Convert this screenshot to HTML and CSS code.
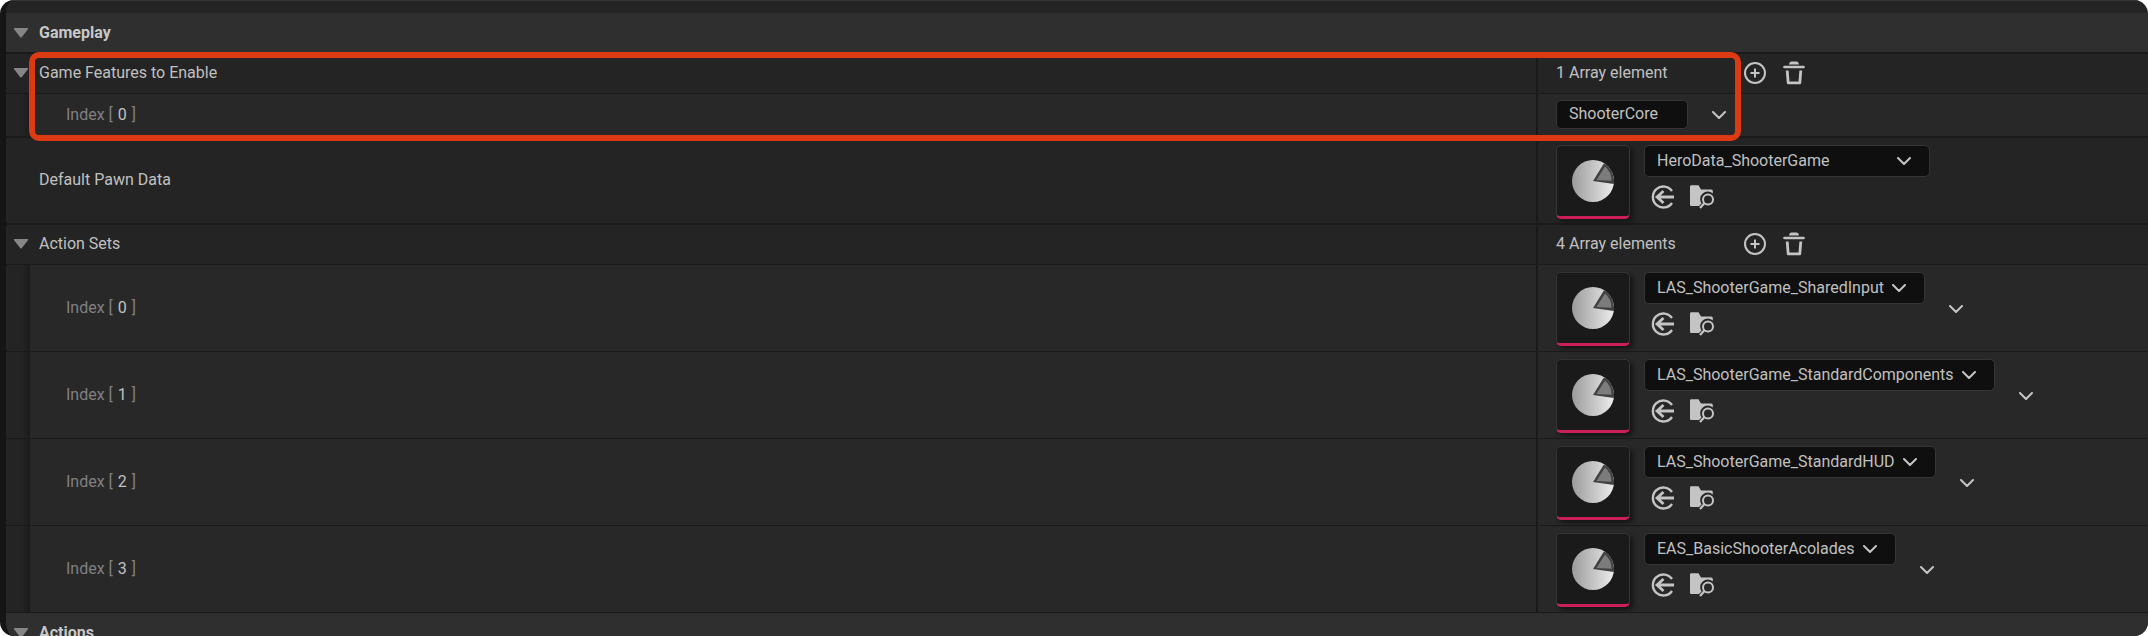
FILE: index.html
```html
<!DOCTYPE html>
<html lang="en">
<head>
<meta charset="utf-8">
<title>Gameplay details</title>
<link rel="stylesheet" href="styles.css">
</head>
<body>
<svg class="defs" aria-hidden="true">
  <defs>
    <linearGradient id="pie-fill" x1="0" y1="0" x2="1" y2="0">
      <stop offset="0" stop-color="#9c9c9c"/>
      <stop offset="1" stop-color="#ececec"/>
    </linearGradient>
    <symbol id="triangle" viewBox="0 0 15 10"><path d="M1 0h13q1 0 .6 .9L8.200 9.300q-.7 .7-1.400 0L.4 .9Q0 0 1 0z" fill="#868686"/></symbol>
    <symbol id="chevron" viewBox="0 0 14 8"><path d="M1 1l6 6 6-6" fill="none" stroke="#c4c4c4" stroke-width="2" stroke-linecap="round" stroke-linejoin="round"/></symbol>
    <symbol id="plus" viewBox="0 0 22 22"><circle cx="11" cy="11" r="10" fill="none" stroke="#c4c4c4" stroke-width="2"/><path d="M11 6.500v9M6.500 11h9" stroke="#c4c4c4" stroke-width="2"/></symbol>
    <symbol id="trash" viewBox="0 0 22 24"><path d="M6 3.500C6.500 1.200 7.500 .6 8.500 .6h5c1 0 2 .6 2.500 2.900z" fill="#c4c4c4"/><path d="M1.500 6h19" stroke="#c4c4c4" stroke-width="2.600" stroke-linecap="round"/><path d="M4.200 9.500l1 12.300h11.600l1-12.300" fill="none" stroke="#c4c4c4" stroke-width="2.800" stroke-linejoin="round"/></symbol>
    <symbol id="use" viewBox="0 0 24 24"><path d="M21 6A10.500 10.500 0 1 0 21 18" fill="none" stroke="#c4c4c4" stroke-width="2.400"/><path d="M23 12H6M12.500 6L6 12l6.500 6" fill="none" stroke="#c4c4c4" stroke-width="2.800"/></symbol>
    <symbol id="browse" viewBox="0 0 24 24"><path d="M0 1.500Q0 .3 1.200 .3H8.500L11 4.500H21.500Q22.800 4.500 22.800 6V8.500A7.600 7.600 0 0 0 11.500 18.500L9 21H1.200Q0 21 0 19.800z" fill="#c4c4c4"/><circle cx="18" cy="14.500" r="5" fill="none" stroke="#c4c4c4" stroke-width="2"/><path d="M14.500 18l-4.500 5" stroke="#c4c4c4" stroke-width="2.200"/></symbol>
    <symbol id="pie" viewBox="0 0 42 42"><circle cx="21" cy="21" r="21" fill="url(#pie-fill)"/><path d="M21 21L32 3.200A21 21 0 0 1 41.800 24z" fill="#414141"/><path d="M24.500 20L33 6.500A18 18 0 0 1 39.500 20.800z" fill="#7c7c7c"/></symbol>
  </defs>
</svg>
<main class="panel">
  <div class="strip"></div>
  <h2 class="category"><button class="toggle" aria-label="Collapse Gameplay"><svg class="tri"><use href="#triangle"/></svg></button>Gameplay</h2>

  <section class="group">
    <div class="highlight"></div>
    <div class="row">
      <div class="name"><button class="toggle" aria-label="Collapse Game Features to Enable"><svg class="tri"><use href="#triangle"/></svg></button>Game Features to Enable</div>
      <div class="value"><span class="count">1 Array element</span><button class="icon" aria-label="Add element"><svg class="plus"><use href="#plus"/></svg></button><button class="icon" aria-label="Remove all"><svg class="trash"><use href="#trash"/></svg></button></div>
    </div>
    <div class="row child short">
      <label class="name" for="feature">Index [ <b>0</b> ]</label>
      <div class="value"><input class="text" id="feature" value="ShooterCore"><button class="more" aria-label="Element options"><svg class="chev"><use href="#chevron"/></svg></button></div>
    </div>
  </section>

  <section class="group">
    <div class="row asset">
      <label class="name" for="pawn">Default Pawn Data</label>
      <div class="value">
        <div class="thumb"><svg class="pie"><use href="#pie"/></svg></div>
        <div class="picker">
          <div class="combo wide"><select id="pawn"><option>HeroData_ShooterGame</option></select><svg class="chev"><use href="#chevron"/></svg></div>
          <div class="tools"><button class="icon" aria-label="Use selected"><svg class="tool"><use href="#use"/></svg></button><button class="icon" aria-label="Browse"><svg class="tool"><use href="#browse"/></svg></button></div>
        </div>
      </div>
    </div>
  </section>

  <section class="group last">
    <div class="row">
      <div class="name"><button class="toggle" aria-label="Collapse Action Sets"><svg class="tri"><use href="#triangle"/></svg></button>Action Sets</div>
      <div class="value"><span class="count">4 Array elements</span><button class="icon" aria-label="Add element"><svg class="plus"><use href="#plus"/></svg></button><button class="icon" aria-label="Remove all"><svg class="trash"><use href="#trash"/></svg></button></div>
    </div>
    <div class="row child asset">
      <label class="name" for="set0">Index [ <b>0</b> ]</label>
      <div class="value">
        <div class="thumb"><svg class="pie"><use href="#pie"/></svg></div>
        <div class="picker">
          <div class="combo"><select id="set0"><option>LAS_ShooterGame_SharedInput</option></select><svg class="chev"><use href="#chevron"/></svg></div>
          <div class="tools"><button class="icon" aria-label="Use selected"><svg class="tool"><use href="#use"/></svg></button><button class="icon" aria-label="Browse"><svg class="tool"><use href="#browse"/></svg></button></div>
        </div>
        <button class="more" aria-label="Element options"><svg class="chev"><use href="#chevron"/></svg></button>
      </div>
    </div>
    <div class="row child asset">
      <label class="name" for="set1">Index [ <b>1</b> ]</label>
      <div class="value">
        <div class="thumb"><svg class="pie"><use href="#pie"/></svg></div>
        <div class="picker">
          <div class="combo"><select id="set1"><option>LAS_ShooterGame_StandardComponents</option></select><svg class="chev"><use href="#chevron"/></svg></div>
          <div class="tools"><button class="icon" aria-label="Use selected"><svg class="tool"><use href="#use"/></svg></button><button class="icon" aria-label="Browse"><svg class="tool"><use href="#browse"/></svg></button></div>
        </div>
        <button class="more" aria-label="Element options"><svg class="chev"><use href="#chevron"/></svg></button>
      </div>
    </div>
    <div class="row child asset">
      <label class="name" for="set2">Index [ <b>2</b> ]</label>
      <div class="value">
        <div class="thumb"><svg class="pie"><use href="#pie"/></svg></div>
        <div class="picker">
          <div class="combo"><select id="set2"><option>LAS_ShooterGame_StandardHUD</option></select><svg class="chev"><use href="#chevron"/></svg></div>
          <div class="tools"><button class="icon" aria-label="Use selected"><svg class="tool"><use href="#use"/></svg></button><button class="icon" aria-label="Browse"><svg class="tool"><use href="#browse"/></svg></button></div>
        </div>
        <button class="more" aria-label="Element options"><svg class="chev"><use href="#chevron"/></svg></button>
      </div>
    </div>
    <div class="row child asset">
      <label class="name" for="set3">Index [ <b>3</b> ]</label>
      <div class="value">
        <div class="thumb"><svg class="pie"><use href="#pie"/></svg></div>
        <div class="picker">
          <div class="combo"><select id="set3"><option>EAS_BasicShooterAcolades</option></select><svg class="chev"><use href="#chevron"/></svg></div>
          <div class="tools"><button class="icon" aria-label="Use selected"><svg class="tool"><use href="#use"/></svg></button><button class="icon" aria-label="Browse"><svg class="tool"><use href="#browse"/></svg></button></div>
        </div>
        <button class="more" aria-label="Element options"><svg class="chev"><use href="#chevron"/></svg></button>
      </div>
    </div>
  </section>

  <h2 class="category"><button class="toggle" aria-label="Collapse Actions"><svg class="tri"><use href="#triangle"/></svg></button>Actions</h2>
</main>
</body>
</html>
```
FILE: styles.css
```css
* { box-sizing: border-box; }

body {
  margin: 0;
  height: 100vh;
  overflow: hidden;
  background: #fff;
  color: #c0c0c0;
  font: 16px/20px Roboto, "Liberation Sans", sans-serif;
}

svg { display: block; }
.defs { position: absolute; width: 0; height: 0; }

button {
  display: flex;
  margin: 0;
  padding: 0;
  border: 0;
  background: none;
}

.panel {
  height: 100vh;
  overflow: hidden;
  border-left: 6px solid #151515;
  border-radius: 14px;
  background: #242424;
}

.strip {
  height: 13px;
  border-top: 1px solid #353535;
}

.category {
  display: flex;
  align-items: center;
  height: 41px;
  margin: 0;
  border-bottom: 2px solid #1a1a1a;
  background: #2f2f2f;
  color: #c8c8c8;
  font-size: 16px;
  font-weight: 700;
}

.toggle {
  width: 33px;
  padding-left: 7px;
}

.tri { width: 16px; height: 10px; }

.group {
  position: relative;
  border-bottom: 2px solid #1a1a1a;
}

.group.last { border-bottom-width: 1px; }

.row {
  display: grid;
  grid-template-columns: 5fr 2fr;
  min-height: 39px;
}

.row + .row { border-top: 1px solid #1a1a1a; }

.name {
  display: flex;
  align-items: center;
  padding-bottom: 1px;
  white-space: pre;
}

.asset .name { padding-left: 33px; }

.child {
  background: linear-gradient(to right, #242424 16px, #1b1b1b 24px, #282828 24px);
}

.child .name {
  padding-left: 60px;
  color: #808080;
}

.child b {
  margin: 0 1px;
  color: #c0c0c0;
  font-weight: 400;
}

.short { min-height: 43px; }

.value {
  display: flex;
  align-items: center;
  padding-bottom: 1px;
  padding-left: 18px;
  border-left: 2px solid #1a1a1a;
}

.count { width: 188px; }

.icon + .icon { margin-left: 17px; }
.plus { width: 22px; height: 22px; }
.trash { width: 22px; height: 24px; }
.chev { width: 14px; height: 8px; }
.more { margin-left: 24px; }

.text,
.combo select {
  border: 1px solid #353535;
  border-radius: 5px;
  background: #0f0f0f;
  color: #c0c0c0;
  font: inherit;
}

.text {
  width: 132px;
  height: 29px;
  padding: 0 12px 2px;
}

.asset .value {
  padding-top: 7px;
  padding-bottom: 4px;
}

.child.asset .value { padding-bottom: 5px; }

.thumb {
  display: grid;
  place-items: center;
  width: 74px;
  height: 74px;
  border: 1px solid #353535;
  border-bottom: 3px solid #cc1f57;
  border-radius: 5px;
  background: #1a1a1a;
  box-shadow: 3px 3px 4px #151515;
}

.pie { width: 42px; height: 42px; }

.picker {
  display: flex;
  flex-direction: column;
  gap: 8px;
  height: 74px;
  margin-left: 14px;
}

.combo {
  display: grid;
  align-items: center;
}

.combo select {
  grid-area: 1 / 1;
  height: 32px;
  padding: 0 40px 0 12px;
  appearance: none;
}

.combo .chev {
  grid-area: 1 / 1;
  justify-self: end;
  margin-right: 19px;
  pointer-events: none;
}

.wide { width: 286px; }

.tools {
  display: flex;
  padding-left: 7px;
}

.tools .icon + .icon { margin-left: 15px; }
.tool { width: 24px; height: 24px; }

/* Callout frame drawn over the first property group */
.highlight {
  position: absolute;
  z-index: 1;
  inset: -2px 19% -5px 23px;
  border: 6px solid #dc3a12;
  border-radius: 10px;
  pointer-events: none;
}
```
